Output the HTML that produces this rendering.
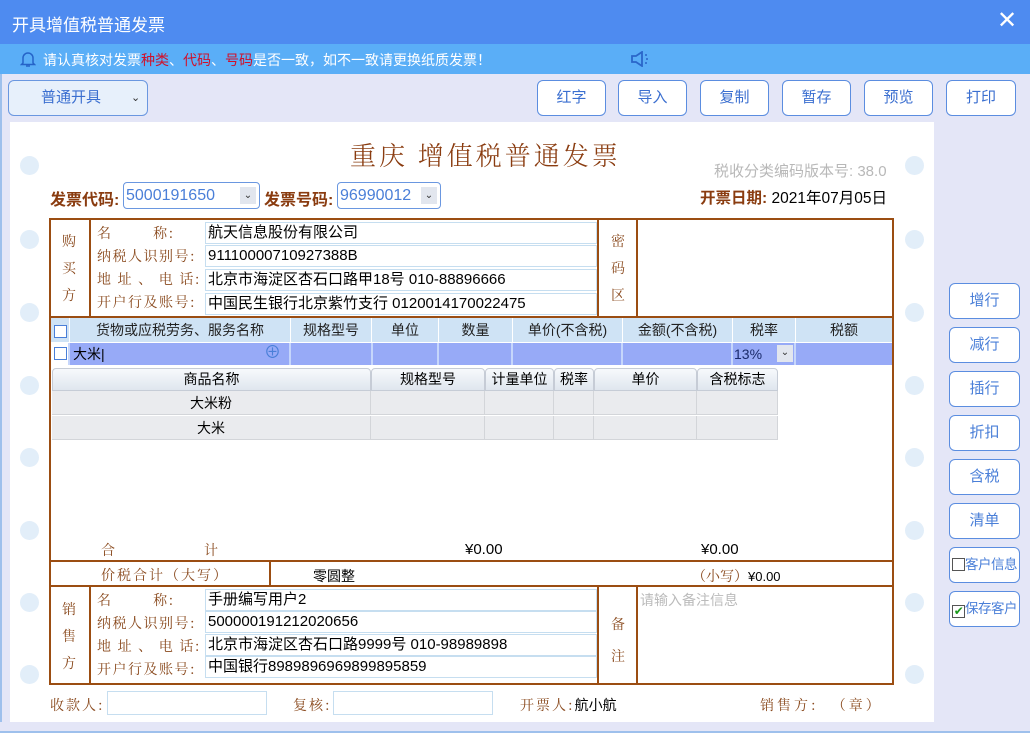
<!DOCTYPE html>
<html><head><meta charset="utf-8"><style>
*{box-sizing:border-box;margin:0;padding:0}
body{width:1030px;height:733px;position:relative;overflow:hidden;background:#e4e6f7;font-family:"Liberation Sans","Noto Sans CJK SC",sans-serif;font-size:14px;color:#000}
.a{position:absolute}
.btn{position:absolute;border:1px solid #5b8de0;border-radius:6px;background:#fff;color:#3b6fd0;font-size:15px;text-align:center;line-height:34px;height:36px}
.rb{position:absolute;left:949px;width:71px;height:36px;border:1px solid #5b8de0;border-radius:6px;background:#fff;color:#4a7fd8;font-size:15px;text-align:center;line-height:34px;white-space:nowrap;overflow:hidden}
.circ{position:absolute;width:19px;height:19px;border-radius:50%;background:#e2eef9}
.lb{color:#8a4a1e;font-family:"Noto Serif CJK SC","Liberation Serif",serif;font-size:14px}
.bh{position:absolute;background:#9b4d12}
.inp{position:absolute;border:1px solid #c6def0;background:#fff;font-size:15px;line-height:20px;padding-left:2px;height:22px}
.th{position:absolute;top:318px;height:24px;background:#cfe3f5;border-right:1px solid #fff;text-align:center;line-height:24px;font-size:14px;color:#222}
.sr{position:absolute;top:343px;height:22px;background:#97aaf7;border-right:2px solid #c6d6fb}
.dh{position:absolute;top:368px;height:23px;background:linear-gradient(#f7f9fc,#dfe6ee);border:1px solid #c6ccd6;border-radius:4px 4px 0 0;text-align:center;line-height:21px;font-size:14px}
.dc{position:absolute;height:24px;background:#eaebee;border-right:1px solid #d3d5d9;border-bottom:1px solid #d3d5d9;text-align:center;line-height:24px;font-size:14px}
</style></head><body>
<div class="a" style="left:0;top:0;width:1030px;height:44px;background:#4e8bf0"></div>
<div class="a" style="left:12px;top:11px;color:#fff;font-size:17px">开具增值税普通发票</div>
<div class="a" style="left:997px;top:6px;color:#fff;font-size:24px;line-height:30px">✕</div>
<div class="a" style="left:0;top:44px;width:1030px;height:30px;background:#5aaef7"></div>
<svg class="a" style="left:20px;top:50px" width="16" height="18" viewBox="0 0 16 18"><path d="M3 13V8a5 5 0 0 1 10 0v5l1.5 1.5h-13z" fill="none" stroke="#2563c8" stroke-width="1.5"/><path d="M6 16h4" stroke="#2563c8" stroke-width="1.5"/></svg>
<div class="a" style="left:43px;top:50px;color:#fff;font-size:14px">请认真核对发票<span style="color:#d0102a">种类</span>、<span style="color:#d0102a">代码</span>、<span style="color:#d0102a">号码</span>是否一致，如不一致请更换纸质发票！</div>
<svg class="a" style="left:630px;top:51px" width="22" height="16" viewBox="0 0 22 16"><path d="M2 5h4l6-4v14l-6-4H2z" fill="none" stroke="#2a66c9" stroke-width="1.8"/><circle cx="16" cy="4" r="1" fill="#2a66c9"/><circle cx="17" cy="8" r="1" fill="#2a66c9"/><circle cx="16" cy="12" r="1" fill="#2a66c9"/></svg>
<div class="a" style="left:0;top:74px;width:2px;height:659px;background:#9ec0ec"></div>
<div class="a" style="left:8px;top:80px;width:140px;height:36px;border:1px solid #6a97e0;border-radius:6px;background:#e7f0fb;color:#3b6fd0;font-size:15px;line-height:34px;padding-left:32px">普通开具<span style="position:absolute;left:122px;top:0;color:#333;font-size:11px">⌄</span></div>
<div class="btn" style="left:537px;top:80px;width:69px">红字</div>
<div class="btn" style="left:618px;top:80px;width:69px">导入</div>
<div class="btn" style="left:700px;top:80px;width:69px">复制</div>
<div class="btn" style="left:782px;top:80px;width:69px">暂存</div>
<div class="btn" style="left:864px;top:80px;width:69px">预览</div>
<div class="btn" style="left:946px;top:80px;width:70px">打印</div>
<div class="a" style="left:10px;top:122px;width:924px;height:600px;background:#fff"></div>
<div class="a" style="left:0;top:722px;width:1030px;height:11px;background:#e4e6f7;border-bottom:2px solid #9ec0ec"></div>
<div class="circ" style="left:20px;top:156px"></div><div class="circ" style="left:20px;top:230px"></div><div class="circ" style="left:20px;top:303px"></div><div class="circ" style="left:20px;top:376px"></div><div class="circ" style="left:20px;top:448px"></div><div class="circ" style="left:20px;top:521px"></div><div class="circ" style="left:20px;top:593px"></div><div class="circ" style="left:20px;top:665px"></div>
<div class="circ" style="left:905px;top:156px"></div><div class="circ" style="left:905px;top:230px"></div><div class="circ" style="left:905px;top:303px"></div><div class="circ" style="left:905px;top:376px"></div><div class="circ" style="left:905px;top:448px"></div><div class="circ" style="left:905px;top:521px"></div><div class="circ" style="left:905px;top:593px"></div><div class="circ" style="left:905px;top:665px"></div>
<div class="a" style="left:350px;top:136px;color:#8a3c10;font-family:'Noto Serif CJK SC',serif;font-size:26px;font-weight:300;letter-spacing:3px">重庆 增值税普通发票</div>
<div class="a" style="left:714px;top:160px;color:#b8b8b8;font-size:15px">税收分类编码版本号: 38.0</div>
<div class="a" style="left:50px;top:186px;color:#8a3c10;font-weight:bold;font-size:16px">发票代码:</div>
<div class="a" style="left:123px;top:182px;width:137px;height:27px;border:1px solid #6a97e0;border-radius:4px;color:#4a7fd8;font-size:16px;line-height:25px;padding-left:2px">5000191650<span style="position:absolute;right:3px;top:4px;width:16px;height:17px;background:#e2e6ee;font-size:10px;line-height:17px;text-align:center;color:#333">⌄</span></div>
<div class="a" style="left:264px;top:186px;color:#8a3c10;font-weight:bold;font-size:16px">发票号码:</div>
<div class="a" style="left:337px;top:182px;width:104px;height:27px;border:1px solid #6a97e0;border-radius:4px;color:#4a7fd8;font-size:16px;line-height:25px;padding-left:2px">96990012<span style="position:absolute;right:3px;top:4px;width:16px;height:17px;background:#e2e6ee;font-size:10px;line-height:17px;text-align:center;color:#333">⌄</span></div>
<div class="a" style="left:700px;top:186px;font-size:15.5px"><b style="color:#8a3c10">开票日期:</b> 2021年07月05日</div>

<div class="bh" style="left:49px;top:218px;width:845px;height:2px"></div>
<div class="bh" style="left:49px;top:218px;width:2px;height:467px"></div>
<div class="bh" style="left:892px;top:218px;width:2px;height:467px"></div>
<div class="bh" style="left:49px;top:683px;width:845px;height:2px"></div>
<div class="bh" style="left:49px;top:316px;width:845px;height:2px"></div>
<div class="bh" style="left:89px;top:218px;width:2px;height:99px"></div>
<div class="bh" style="left:597px;top:218px;width:2px;height:99px"></div>
<div class="bh" style="left:636px;top:218px;width:2px;height:99px"></div>
<div class="bh" style="left:49px;top:560px;width:845px;height:2px"></div>
<div class="bh" style="left:49px;top:585px;width:845px;height:2px"></div>
<div class="bh" style="left:269px;top:561px;width:2px;height:25px"></div>
<div class="bh" style="left:89px;top:586px;width:2px;height:98px"></div>
<div class="bh" style="left:597px;top:586px;width:2px;height:98px"></div>
<div class="bh" style="left:636px;top:586px;width:2px;height:98px"></div>

<div class="a lb" style="left:62px;top:228px;line-height:27px">购<br>买<br>方</div>
<div class="a lb" style="left:97px;top:222px;line-height:23px;letter-spacing:1.5px">名&nbsp;&nbsp;&nbsp;&nbsp;&nbsp;&nbsp;&nbsp;&nbsp;称:<br>纳税人识别号:<br>地 址 、 电 话:<br>开户行及账号:</div>
<div class="inp" style="left:205px;top:222px;width:392px">航天信息股份有限公司</div>
<div class="inp" style="left:205px;top:245px;width:392px">91110000710927388B</div>
<div class="inp" style="left:205px;top:269px;width:392px">北京市海淀区杏石口路甲18号 010-88896666</div>
<div class="inp" style="left:205px;top:293px;width:392px">中国民生银行北京紫竹支行 0120014170022475</div>
<div class="a lb" style="left:611px;top:228px;line-height:27px">密<br>码<br>区</div>

<div class="th" style="left:51px;width:19px"><span style="display:inline-block;width:13px;height:13px;border:1px solid #4a7fd8;background:#fff;vertical-align:middle"></span></div>
<div class="th" style="left:70px;width:221px">货物或应税劳务、服务名称</div>
<div class="th" style="left:291px;width:81px">规格型号</div>
<div class="th" style="left:372px;width:67px">单位</div>
<div class="th" style="left:439px;width:74px">数量</div>
<div class="th" style="left:513px;width:110px">单价(不含税)</div>
<div class="th" style="left:623px;width:110px">金额(不含税)</div>
<div class="th" style="left:733px;width:63px">税率</div>
<div class="th" style="left:796px;width:96px;border:none">税额</div>
<div class="sr" style="left:51px;width:19px;background:#fff"><span style="position:absolute;left:3px;top:4px;width:13px;height:13px;border:1px solid #4a7fd8"></span></div>
<div class="sr" style="left:70px;width:221px;padding-left:3px;font-size:14px;line-height:22px">大米|<span style="position:absolute;left:194px;top:-1px;color:#4a7fd8;font-size:17px">⊕</span></div>
<div class="sr" style="left:291px;width:82px"></div>
<div class="sr" style="left:373px;width:66px"></div>
<div class="sr" style="left:439px;width:74px"></div>
<div class="sr" style="left:513px;width:110px"></div>
<div class="sr" style="left:623px;width:110px"></div>
<div class="sr" style="left:733px;width:63px;line-height:22px;padding-left:1px;color:#1a2a6a">13%<span style="position:absolute;left:44px;top:2px;width:16px;height:17px;background:#e2e6ee;font-size:10px;line-height:16px;text-align:center;color:#333">⌄</span></div>
<div class="sr" style="left:796px;width:96px;border:none"></div>

<div class="dh" style="left:52px;width:319px">商品名称</div>
<div class="dh" style="left:371px;width:114px">规格型号</div>
<div class="dh" style="left:485px;width:69px">计量单位</div>
<div class="dh" style="left:554px;width:40px">税率</div>
<div class="dh" style="left:594px;width:103px">单价</div>
<div class="dh" style="left:697px;width:81px">含税标志</div>
<div class="dc" style="left:52px;top:391px;width:319px">大米粉</div>
<div class="dc" style="left:371px;top:391px;width:114px"></div>
<div class="dc" style="left:485px;top:391px;width:69px"></div>
<div class="dc" style="left:554px;top:391px;width:40px"></div>
<div class="dc" style="left:594px;top:391px;width:103px"></div>
<div class="dc" style="left:697px;top:391px;width:81px"></div>
<div class="dc" style="left:52px;top:416px;width:319px">大米</div>
<div class="dc" style="left:371px;top:416px;width:114px"></div>
<div class="dc" style="left:485px;top:416px;width:69px"></div>
<div class="dc" style="left:554px;top:416px;width:40px"></div>
<div class="dc" style="left:594px;top:416px;width:103px"></div>
<div class="dc" style="left:697px;top:416px;width:81px"></div>

<div class="a lb" style="left:101px;top:540px">合</div>
<div class="a lb" style="left:204px;top:540px">计</div>
<div class="a" style="left:465px;top:541px;font-size:15px">¥0.00</div>
<div class="a" style="left:701px;top:541px;font-size:15px">¥0.00</div>
<div class="a lb" style="left:101px;top:565px;letter-spacing:2px">价税合计（大写）</div>
<div class="a" style="left:313px;top:566px;font-size:14px">零圆整</div>
<div class="a" style="left:692px;top:566px;font-size:13px;white-space:nowrap"><span class="lb">（小写）</span>¥0.00</div>

<div class="a lb" style="left:62px;top:596px;line-height:27px">销<br>售<br>方</div>
<div class="a lb" style="left:97px;top:589px;line-height:23px;letter-spacing:1.5px">名&nbsp;&nbsp;&nbsp;&nbsp;&nbsp;&nbsp;&nbsp;&nbsp;称:<br>纳税人识别号:<br>地 址 、 电 话:<br>开户行及账号:</div>
<div class="inp" style="left:205px;top:589px;width:392px">手册编写用户2</div>
<div class="inp" style="left:205px;top:611px;width:392px">500000191212020656</div>
<div class="inp" style="left:205px;top:634px;width:392px">北京市海淀区杏石口路9999号 010-98989898</div>
<div class="inp" style="left:205px;top:656px;width:392px">中国银行8989896969899895859</div>
<div class="a lb" style="left:611px;top:608px;line-height:32px">备<br>注</div>
<div class="a" style="left:640px;top:590px;color:#bbb;font-size:14px">请输入备注信息</div>

<div class="a lb" style="left:50px;top:695px;letter-spacing:2px">收款人:</div>
<div class="a" style="left:107px;top:691px;width:160px;height:24px;border:1px solid #c6def0"></div>
<div class="a lb" style="left:293px;top:695px;letter-spacing:2px">复核:</div>
<div class="a" style="left:333px;top:691px;width:160px;height:24px;border:1px solid #c6def0"></div>
<div class="a" style="left:520px;top:695px;font-size:14px"><span class="lb" style="letter-spacing:2px">开票人:</span>航小航</div>
<div class="a lb" style="left:760px;top:695px;letter-spacing:3px">销售方:&nbsp;&nbsp;（章）</div>

<div class="rb" style="top:283px">增行</div>
<div class="rb" style="top:327px">减行</div>
<div class="rb" style="top:371px">插行</div>
<div class="rb" style="top:415px">折扣</div>
<div class="rb" style="top:459px">含税</div>
<div class="rb" style="top:503px">清单</div>
<div class="rb" style="top:547px;font-size:13.5px;text-align:left;padding-left:2px;letter-spacing:-0.5px"><span style="display:inline-block;width:13px;height:13px;border:1px solid #555;vertical-align:-2px"></span>客户信息</div>
<div class="rb" style="top:591px;font-size:13.5px;text-align:left;padding-left:2px;letter-spacing:-0.5px"><span style="display:inline-block;width:13px;height:13px;border:1px solid #555;vertical-align:-2px;color:#1a9a1a;font-size:12px;line-height:11px;text-align:center">✔</span>保存客户</div>
</body></html>
